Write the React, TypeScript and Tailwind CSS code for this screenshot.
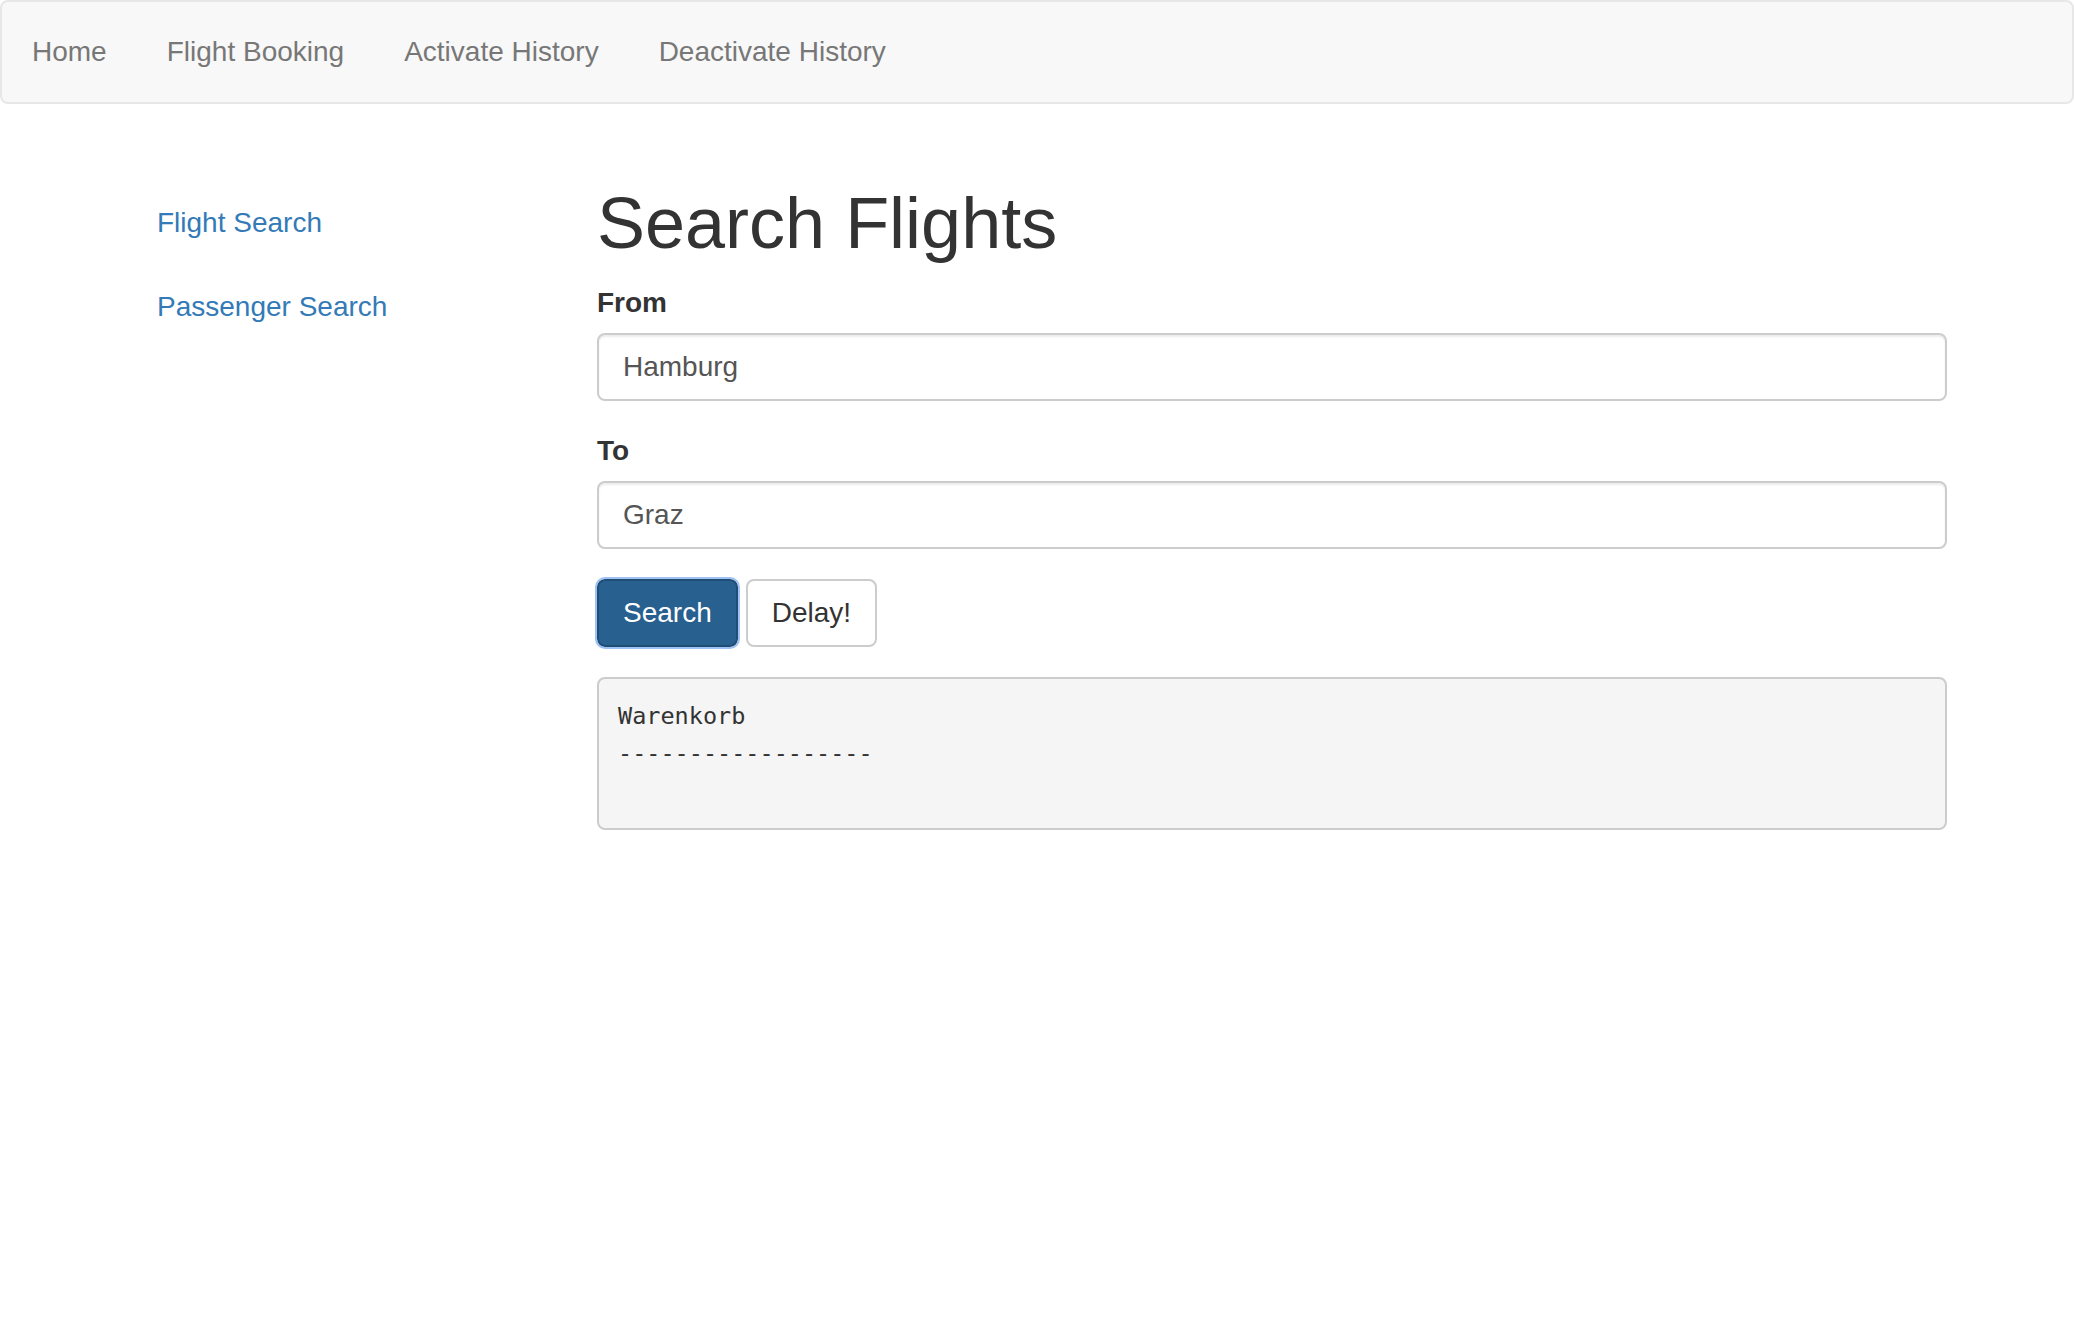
import React from "react";

const navLinks = ["Home", "Flight Booking", "Activate History", "Deactivate History"];
const sideLinks = ["Flight Search", "Passenger Search"];

export default function App() {
  const cart = "Warenkorb\n------------------\n\n";

  return (
    <div className="min-h-screen bg-white font-['Liberation_Sans',Arial,sans-serif] text-[28px] text-[#333]">
      <nav className="h-[104px] rounded-[8px] border-2 border-[#e7e7e7] bg-[#f8f8f8]">
        <ul className="flex">
          {navLinks.map((label) => (
            <li key={label}>
              <a href="#" className="block px-[30px] py-[30px] leading-[40px] text-[#777]">
                {label}
              </a>
            </li>
          ))}
        </ul>
      </nav>

      <div className="mt-[40px] flex">
        <aside className="ml-[127px] w-[470px] pt-[39px]">
          <ul className="flex flex-col gap-[4px]">
            {sideLinks.map((label) => (
              <li key={label}>
                <a href="#" className="block px-[30px] py-[20px] leading-[40px] text-[#337ab7]">
                  {label}
                </a>
              </li>
            ))}
          </ul>
        </aside>

        <main className="w-[1350px]">
          <h1 className="mt-[40px] mb-[20px] text-[72px] leading-[1.1] font-normal text-[#333]">Search Flights</h1>

          <div className="mb-[30px]">
            <label className="mb-[10px] block font-bold leading-[40px]">From</label>
            <input
              defaultValue="Hamburg"
              className="block h-[68px] w-full rounded-[8px] border-2 border-[#ccc] bg-white px-[24px] py-[12px] leading-[40px] text-[#555] shadow-[inset_0_2px_2px_rgba(0,0,0,0.075)] outline-none"
            />
          </div>

          <div className="mb-[30px]">
            <label className="mb-[10px] block font-bold leading-[40px]">To</label>
            <input
              defaultValue="Graz"
              className="block h-[68px] w-full rounded-[8px] border-2 border-[#ccc] bg-white px-[24px] py-[12px] leading-[40px] text-[#555] shadow-[inset_0_2px_2px_rgba(0,0,0,0.075)] outline-none"
            />
          </div>

          <div className="mb-[30px] flex gap-[8px]">
            <button
              type="button"
              className="h-[68px] rounded-[8px] border-2 border-[#204d74] bg-[#286090] px-[24px] py-[12px] leading-[40px] text-white outline-2 outline-[#9ec2f5]"
            >
              Search
            </button>
            <button
              type="button"
              className="h-[68px] rounded-[8px] border-2 border-[#ccc] bg-white px-[24px] py-[12px] leading-[40px] text-[#333]"
            >
              Delay!
            </button>
          </div>

          <pre className="rounded-[8px] border-2 border-[#ccc] bg-[#f5f5f5] p-[19px] font-['DejaVu_Sans_Mono',monospace] text-[23.5px] leading-[37px] text-[#333]">
            {cart}
          </pre>
        </main>
      </div>
    </div>
  );
}
